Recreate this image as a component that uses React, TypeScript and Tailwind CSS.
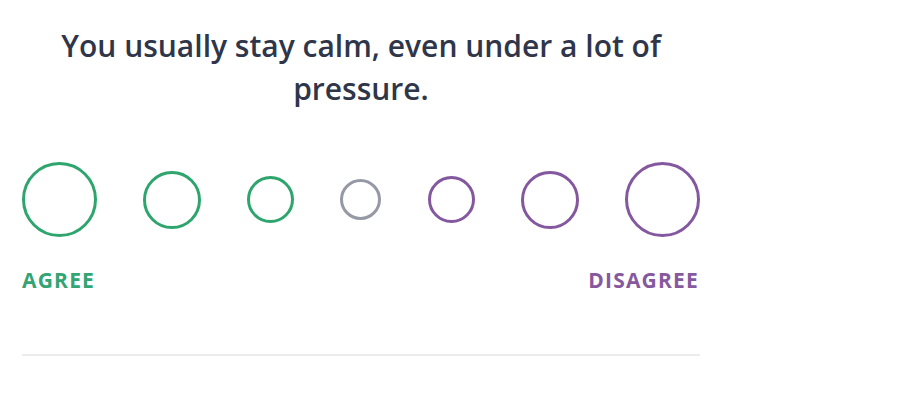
const options = [
  { size: 'w-[75px] h-[75px]', color: 'border-[#2fa56e]' },
  { size: 'w-[58px] h-[58px]', color: 'border-[#2fa56e]' },
  { size: 'w-[47px] h-[47px]', color: 'border-[#2fa56e]' },
  { size: 'w-[41px] h-[41px]', color: 'border-[#9599a6]' },
  { size: 'w-[47px] h-[47px]', color: 'border-[#84589e]' },
  { size: 'w-[58px] h-[58px]', color: 'border-[#84589e]' },
  { size: 'w-[75px] h-[75px]', color: 'border-[#84589e]' },
]

const App = () => {
  return (
    <div className="min-h-[400px] w-[900px] bg-white font-['Open_Sans',sans-serif]">
      <div className="ml-[22px] w-[678px] pt-[24px]">
        <h2 className="text-center text-[30px] font-semibold leading-[43px] text-[#30364a] px-[20px]">
          You usually stay calm, even under a lot of pressure.
        </h2>
        <div className="mt-[52px] flex h-[75px] items-center justify-between">
          {options.map((o, i) => (
            <button
              key={i}
              className={`${o.size} ${o.color} shrink-0 rounded-full border-[3px] bg-white`}
            />
          ))}
        </div>
        <div className="mt-[31px] flex justify-between text-[21px] font-bold leading-[24px] tracking-[1.2px]">
          <span className="text-[#33a474]">AGREE</span>
          <span className="mr-[1px] text-[#86599f]">DISAGREE</span>
        </div>
        <div className="mt-[62px] h-[2px] bg-[#ececec]" />
      </div>
    </div>
  )
}

export default App
